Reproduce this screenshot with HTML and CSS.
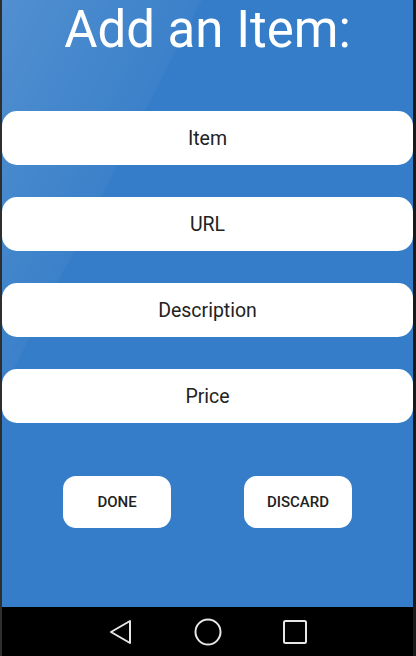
FILE: index.html
```html
<!DOCTYPE html>
<html>
<head>
<meta charset="utf-8">
<link rel="stylesheet" href="styles.css">
</head>
<body>
<div class="device">
  <main class="screen">
    <h1 class="title">Add an Item:</h1>
    <div class="fields">
      <div class="field">Item</div>
      <div class="field">URL</div>
      <div class="field">Description</div>
      <div class="field">Price</div>
    </div>
    <div class="actions">
      <button class="btn">DONE</button>
      <button class="btn">DISCARD</button>
    </div>
  </main>
  <nav class="navbar">
    <svg class="nav-icon" width="26" height="28" viewBox="0 0 26 28"><path d="M22 3 L22 25 L3 14 Z" fill="none" stroke="#e6e6e6" stroke-width="2" stroke-linejoin="round"/></svg>
    <svg class="nav-icon" width="28" height="28" viewBox="0 0 28 28"><circle cx="14" cy="14" r="12.5" fill="none" stroke="#e6e6e6" stroke-width="2"/></svg>
    <svg class="nav-icon" width="26" height="28" viewBox="0 0 26 28"><rect x="2" y="3" width="22" height="22" rx="1.5" fill="none" stroke="#e6e6e6" stroke-width="2"/></svg>
  </nav>
</div>
</body>
</html>
```
FILE: styles.css
```css
html, body {
  margin: 0;
  padding: 0;
  background: #1c1c1c;
}
.device {
  width: 416px;
  height: 656px;
  display: flex;
  flex-direction: column;
  box-sizing: border-box;
  border-left: 2px solid #2e2e2e;
  border-right: 3px solid #1a1a1a;
  font-family: Roboto, "Noto Sans", sans-serif;
}
.screen {
  flex: 1;
  display: flex;
  flex-direction: column;
  background:
    linear-gradient(117deg, rgba(255,255,255,0.14) 0, rgba(255,255,255,0.03) 178px, rgba(255,255,255,0) 178px),
    #357dc8;
}
.title {
  margin: 0;
  height: 60px;
  line-height: 60px;
  font-size: 51px;
  font-weight: 400;
  color: #ffffff;
  text-align: center;
}
.fields {
  display: flex;
  flex-direction: column;
  gap: 32px;
  margin-top: 51px;
}
.field {
  height: 54px;
  background: #ffffff;
  border-radius: 15px;
  display: flex;
  align-items: center;
  justify-content: center;
  font-size: 19.5px;
  color: #222222;
}
.actions {
  display: flex;
  justify-content: space-between;
  padding: 0 61px;
  margin-top: 53px;
}
.btn {
  width: 108px;
  height: 52px;
  border: none;
  border-radius: 13px;
  background: #ffffff;
  font-family: Roboto, "Noto Sans", sans-serif;
  font-weight: 500;
  font-size: 15px;
  color: #222222;
  padding: 0;
}
.navbar {
  height: 49px;
  background: #000000;
  display: flex;
  align-items: center;
  justify-content: center;
  gap: 60px;
}
```
